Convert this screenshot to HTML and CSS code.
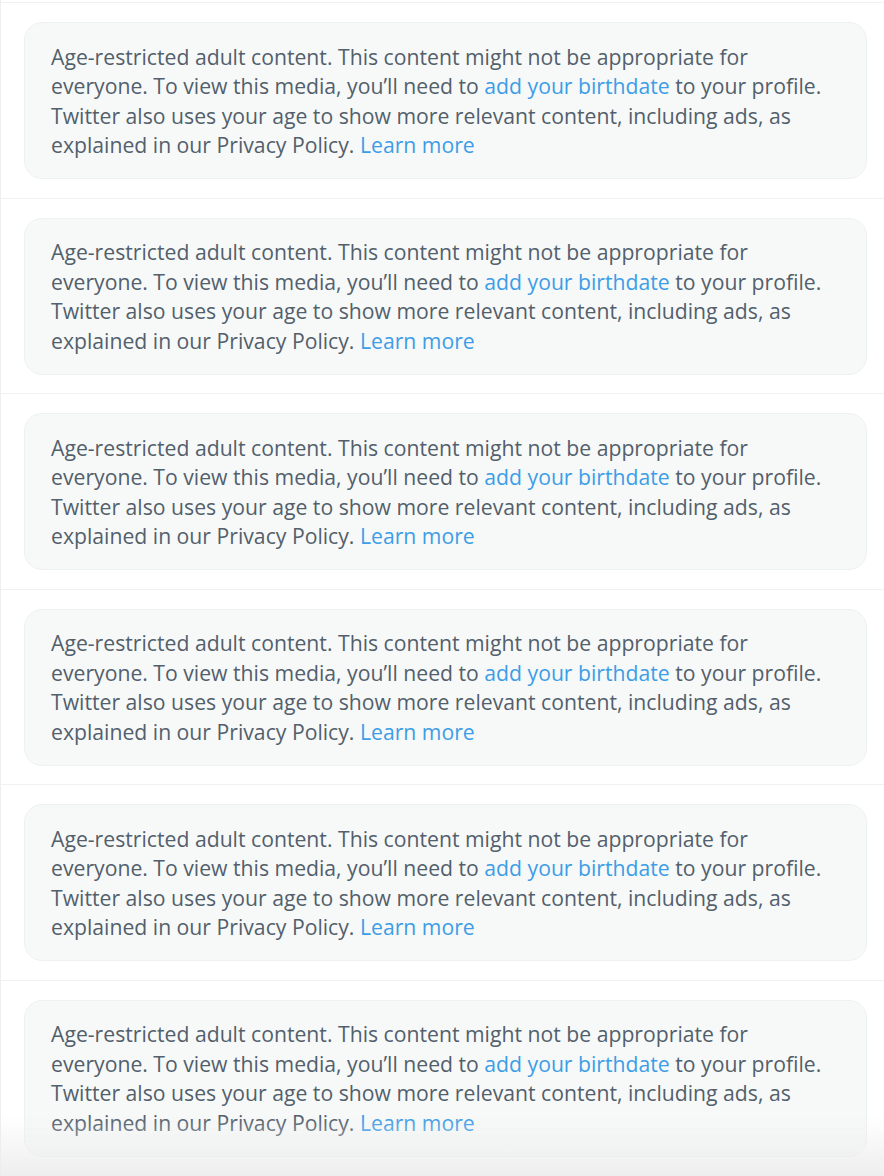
FILE: index.html
```html
<!DOCTYPE html>
<html lang="en">
<head>
<meta charset="utf-8">
<title>Timeline</title>
<link rel="stylesheet" href="styles.css">
</head>
<body>
<main class="timeline">
  <article class="tweet">
    <div class="notice">Age-restricted adult content. This content might not be appropriate for everyone. To view this media, you’ll need to <a class="link" href="#">add your birthdate</a> to your profile. Twitter also uses your age to show more relevant content, including ads, as explained in our Privacy Policy. <a class="link" href="#">Learn more</a></div>
  </article>
  <article class="tweet">
    <div class="notice">Age-restricted adult content. This content might not be appropriate for everyone. To view this media, you’ll need to <a class="link" href="#">add your birthdate</a> to your profile. Twitter also uses your age to show more relevant content, including ads, as explained in our Privacy Policy. <a class="link" href="#">Learn more</a></div>
  </article>
  <article class="tweet">
    <div class="notice">Age-restricted adult content. This content might not be appropriate for everyone. To view this media, you’ll need to <a class="link" href="#">add your birthdate</a> to your profile. Twitter also uses your age to show more relevant content, including ads, as explained in our Privacy Policy. <a class="link" href="#">Learn more</a></div>
  </article>
  <article class="tweet">
    <div class="notice">Age-restricted adult content. This content might not be appropriate for everyone. To view this media, you’ll need to <a class="link" href="#">add your birthdate</a> to your profile. Twitter also uses your age to show more relevant content, including ads, as explained in our Privacy Policy. <a class="link" href="#">Learn more</a></div>
  </article>
  <article class="tweet">
    <div class="notice">Age-restricted adult content. This content might not be appropriate for everyone. To view this media, you’ll need to <a class="link" href="#">add your birthdate</a> to your profile. Twitter also uses your age to show more relevant content, including ads, as explained in our Privacy Policy. <a class="link" href="#">Learn more</a></div>
  </article>
  <article class="tweet">
    <div class="notice">Age-restricted adult content. This content might not be appropriate for everyone. To view this media, you’ll need to <a class="link" href="#">add your birthdate</a> to your profile. Twitter also uses your age to show more relevant content, including ads, as explained in our Privacy Policy. <a class="link" href="#">Learn more</a></div>
  </article>
</main>
<div class="fade"></div>
</body>
</html>
```
FILE: styles.css
```css
html, body {
  margin: 0;
  padding: 0;
  background: #ffffff;
}

body {
  font-family: "Open Sans", "Noto Sans", "Liberation Sans", Arial, sans-serif;
  height: 1176px;
  overflow: hidden;
}

.timeline {
  display: flex;
  flex-direction: column;
  padding-top: 2px;
  border-left: 1px solid #eceff1;
  min-height: 1176px;
  box-sizing: border-box;
}

.tweet {
  border-top: 1px solid #eff1f2;
  padding: 19px 17px 18.5px 23px;
}

.notice {
  background: #f7f9f9;
  border: 1px solid #eef1f2;
  border-radius: 18px;
  padding: 18.5px 30px 18.5px 26px;
  font-size: 21.2px;
  line-height: 29.5px;
  color: #535f6b;
}

.link {
  color: #3d9de6;
  text-decoration: none;
}

.fade {
  position: fixed;
  left: 0;
  right: 0;
  bottom: 0;
  height: 60px;
  background: linear-gradient(to bottom, rgba(238, 238, 238, 0), rgba(236, 236, 236, 0.9));
  pointer-events: none;
}
```
